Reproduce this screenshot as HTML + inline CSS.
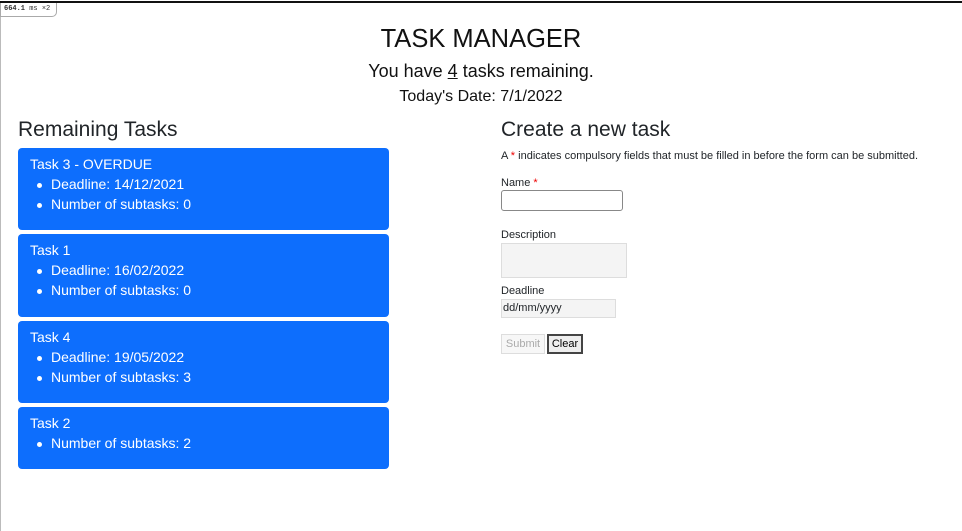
<!DOCTYPE html>
<html><head><style>
*{margin:0;padding:0;box-sizing:border-box}
body{width:962px;height:531px;background:#fff;font-family:"Liberation Sans",sans-serif;color:#212529;position:relative;overflow:hidden}
.a{position:absolute;white-space:nowrap}
.card{position:absolute;left:18px;width:371px;background:#0d6efd;border-radius:4px;color:#fff;font-size:14px}
.card .t{position:absolute;left:12px;top:8px}
.card .l{position:absolute;left:33px}
.card .l:before{content:"";position:absolute;left:-14px;top:7px;width:5px;height:5px;border-radius:50%;background:#fff}
.c{left:0;width:962px;text-align:center}
.f{font-size:11px}
</style></head><body>
<div class="a" style="left:0;top:1px;width:962px;height:2px;background:#111"></div>
<div class="a" style="left:0;top:3px;width:1px;height:528px;background:#bbb"></div>
<div class="a" style="left:0;top:3px;width:57px;height:14px;border:1px solid #aaa;border-top:none;border-radius:0 0 5px 0;font-family:'Liberation Mono',monospace;font-size:7px;padding:2px 3px;color:#333"><b>664.1</b> ms ×2</div>
<div class="a c" style="top:25px;font-size:25.5px;color:#111">TASK MANAGER</div>
<div class="a c" style="top:61px;font-size:18px;color:#111">You have <u>4</u> tasks remaining.</div>
<div class="a c" style="top:88px;font-size:16px;color:#111">Today's Date: 7/1/2022</div>
<div class="a" style="left:18px;top:118px;font-size:21px">Remaining Tasks</div>
<div class="a" style="left:501px;top:118px;font-size:21px">Create a new task</div>
<div class="card" style="top:148px;height:82px"><div class="t">Task 3 - OVERDUE</div><div class="l" style="top:28px">Deadline: 14/12/2021</div><div class="l" style="top:48px">Number of subtasks: 0</div></div>
<div class="card" style="top:234px;height:83px"><div class="t">Task 1</div><div class="l" style="top:28px">Deadline: 16/02/2022</div><div class="l" style="top:48px">Number of subtasks: 0</div></div>
<div class="card" style="top:321px;height:82px"><div class="t">Task 4</div><div class="l" style="top:28px">Deadline: 19/05/2022</div><div class="l" style="top:48px">Number of subtasks: 3</div></div>
<div class="card" style="top:407px;height:62px"><div class="t">Task 2</div><div class="l" style="top:28px">Number of subtasks: 2</div></div>
<div class="a f" style="left:501px;top:150px">A <span style="color:#e00">*</span> indicates compulsory fields that must be filled in before the form can be submitted.</div>
<div class="a f" style="left:501px;top:177px">Name <span style="color:#e00">*</span></div>
<div class="a" style="left:501px;top:190px;width:122px;height:21px;border:1px solid #888;border-radius:3px"></div>
<div class="a f" style="left:501px;top:229px">Description</div>
<div class="a" style="left:501px;top:243px;width:126px;height:35px;border:1px solid #ddd;background:#f4f4f4"></div>
<div class="a f" style="left:501px;top:285px">Deadline</div>
<div class="a f" style="left:501px;top:299px;width:115px;height:19px;border:1px solid #ddd;background:#f4f4f4;padding:2px 1px">dd/mm/yyyy</div>
<div class="a f" style="left:501px;top:334px;width:44px;height:20px;border:1px solid #ddd;background:#f7f7f7;color:#aaa;text-align:center;padding-top:3px">Submit</div>
<div class="a f" style="left:547px;top:334px;width:36px;height:20px;border:2px solid #444;background:#eee;color:#000;text-align:center;padding-top:2px">Clear</div>
</body></html>
